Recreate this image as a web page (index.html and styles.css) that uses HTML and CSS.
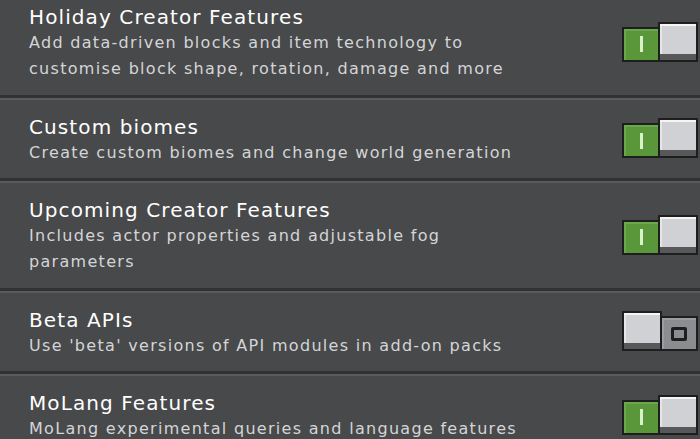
FILE: index.html
```html
<!DOCTYPE html>
<html lang="en">
<head>
<meta charset="utf-8">
<title>Experiments</title>
<link rel="stylesheet" href="styles.css">
</head>
<body>
<div class="list">
  <div class="row">
    <div class="text">
      <div class="title">Holiday Creator Features</div>
      <div class="desc">Add data-driven blocks and item technology to customise block shape, rotation, damage and more</div>
    </div>
    <div class="toggle on"><span class="track"><span class="mark-on"></span></span><span class="knob"></span></div>
  </div>
  <div class="row">
    <div class="text">
      <div class="title">Custom biomes</div>
      <div class="desc">Create custom biomes and change world generation</div>
    </div>
    <div class="toggle on"><span class="track"><span class="mark-on"></span></span><span class="knob"></span></div>
  </div>
  <div class="row">
    <div class="text">
      <div class="title">Upcoming Creator Features</div>
      <div class="desc">Includes actor properties and adjustable fog parameters</div>
    </div>
    <div class="toggle on"><span class="track"><span class="mark-on"></span></span><span class="knob"></span></div>
  </div>
  <div class="row">
    <div class="text">
      <div class="title">Beta APIs</div>
      <div class="desc">Use 'beta' versions of API modules in add-on packs</div>
    </div>
    <div class="toggle off"><span class="knob"></span><span class="track"><span class="mark-off"></span></span></div>
  </div>
  <div class="row">
    <div class="text">
      <div class="title">MoLang Features</div>
      <div class="desc">MoLang experimental queries and language features</div>
    </div>
    <div class="toggle on"><span class="track"><span class="mark-on"></span></span><span class="knob"></span></div>
  </div>
</div>
</body>
</html>
```
FILE: styles.css
```css
html, body {
  margin: 0;
  padding: 0;
  background: #48494a;
  overflow: hidden;
}

body {
  font-family: "DejaVu Sans", "Liberation Sans", sans-serif;
  color: #ffffff;
}

.list {
  margin-top: -10px;
}

.row {
  display: flex;
  align-items: center;
  padding: 14px 2px 12.5px 29px;
  border-bottom: 3px solid #313233;
}

.row + .row {
  border-top: 2px solid #5a5b5c;
}

.text {
  width: 505px;
  flex: none;
}

.title {
  font-size: 20px;
  letter-spacing: 1.1px;
  line-height: 26px;
  color: #ffffff;
  white-space: nowrap;
}

.desc {
  font-size: 16px;
  letter-spacing: 1.3px;
  line-height: 26px;
  color: #d4d5d8;
}

.toggle {
  margin-left: auto;
  display: flex;
  align-items: flex-end;
  margin-bottom: 3px;
}

.track {
  box-sizing: border-box;
  width: 38px;
  height: 35px;
  border: 2px solid #1e1e1f;
  display: flex;
  align-items: center;
  justify-content: center;
}

.on .track {
  background: #5a963a;
  box-shadow: inset 2px 2px 0 #6aa94a;
}

.off .track {
  background: #8c8d90;
  box-shadow: inset 2px 2px 0 #9c9da0;
  margin-left: -2px;
}

.knob {
  box-sizing: border-box;
  width: 40px;
  height: 40px;
  border: 2px solid #1e1e1f;
  background: #d0d1d4;
  box-shadow: inset 0 -6px 0 #58585a, inset 0 2px 0 #f4f4f4, inset 2px 0 0 #e6e6e6;
}

.on .knob {
  margin-left: -2px;
}

.mark-on {
  width: 3px;
  height: 16px;
  background: #d8f2c8;
}

.mark-off {
  box-sizing: border-box;
  flex: none;
  width: 16px;
  height: 14px;
  border: 3px solid #1e1e1f;
  border-radius: 2px;
}
```
